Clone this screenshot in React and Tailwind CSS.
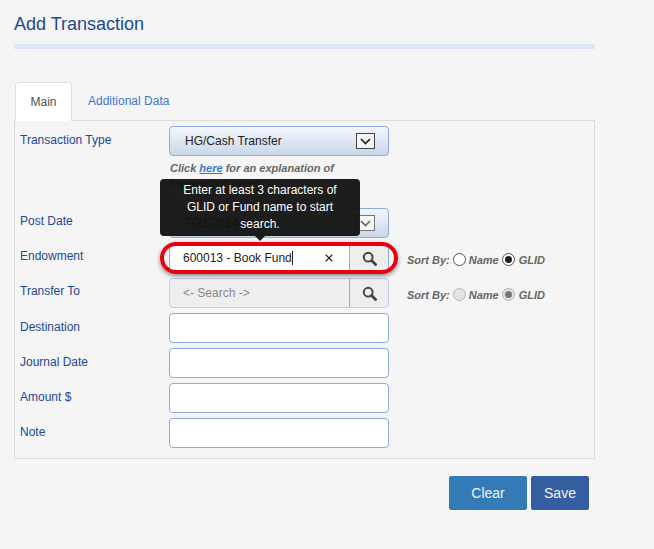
import { useState } from "react";
import { X } from "lucide-react";

const gradientSelect =
  "h-[30px] w-[220px] rounded-[4px] border border-[#8eabdc] bg-gradient-to-b from-[#f3f7fd] to-[#c9d7ea] flex items-center pl-[15px] pr-[13px] text-[12px] text-[#222]";

function Arrow({ muted }) {
  return (
    <span
      className={`ml-auto flex h-[16px] w-[19px] items-center justify-center border bg-[#f6f6f6] ${
        muted ? "border-[#777]" : "border-[#444]"
      }`}
    >
      <svg width="11" height="7" viewBox="0 0 11 7" fill="none" stroke={muted ? "#666" : "#222"} strokeWidth="1.7">
        <path d="M1 1l4.5 4.5L10 1" />
      </svg>
    </span>
  );
}

function Row({ label, low, children }) {
  return (
    <div className="flex">
      <label className={`w-[149px] text-[12px] leading-[16px] text-[#1c4898] ${low ? "pt-[6px]" : "pt-[5px]"}`}>
        {label}
      </label>
      {children}
    </div>
  );
}

function Radio({ on, disabled }) {
  return (
    <span
      className={`flex h-[13px] w-[13px] items-center justify-center rounded-full border ${
        disabled ? "border-[#b5b5b5] bg-[#e4e4e4]" : "border-[#555] bg-white"
      }`}
    >
      {on && <span className={`h-[7px] w-[7px] rounded-full ${disabled ? "bg-[#777]" : "bg-[#222]"}`} />}
    </span>
  );
}

function SortBy({ disabled }) {
  return (
    <div className="ml-[18px] flex items-center pt-[5px] text-[11px] font-bold italic text-[#666]">
      <span className="mr-[3px]">Sort By:</span>
      <span className="-mt-[3px]"><Radio disabled={disabled} /></span>
      <span className="ml-[3px] mr-[3px]">Name</span>
      <span className="-mt-[3px]"><Radio on disabled={disabled} /></span>
      <span className="ml-[4px]">GLID</span>
    </div>
  );
}

function LookupIcon() {
  return (
    <svg width="15" height="15" viewBox="0 0 15 15" fill="none" stroke="#444">
      <circle cx="6.2" cy="6.2" r="4.4" strokeWidth="2" />
      <path d="M9.6 9.6l4 4" strokeWidth="2.8" strokeLinecap="round" />
    </svg>
  );
}

function TextField() {
  return <input className="h-[30px] w-[220px] rounded-[4px] border border-[#8eabdc] bg-white" />;
}

export default function App() {
  const [tab] = useState("main");

  return (
    <div
      className="min-h-[549px] w-[654px] overflow-hidden bg-[#f5f5f5] px-[14px] pt-[13px]"
      style={{ fontFamily: '"Liberation Sans", Arial, sans-serif' }}
    >
      <h1 className="text-[18px] leading-[22px] text-[#1c4898]">Add Transaction</h1>
      <div className="mt-[9px] h-[5px] w-[581px] bg-[#dce6f6]" />

      <div className="mt-[33px] flex h-[38px] w-[581px] pl-px">
        <div
          className={`relative z-10 flex h-[39px] w-[57px] items-center justify-center rounded-t-[4px] border border-b-0 border-[#e0e0e0] bg-white text-[12px] text-[#555] ${
            tab === "main" ? "" : "hidden"
          }`}
        >
          Main
        </div>
        <div className="ml-[16px] flex items-center text-[12px] text-[#3f75d2]">Additional Data</div>
      </div>

      <div className="flex h-[339px] w-[581px] flex-col gap-[5px] border border-[#dcdcdc] px-[5px] pt-[5px]">
        <div>
          <Row label="Transaction Type" low>
            <div className={gradientSelect}>
              HG/Cash Transfer
              <Arrow />
            </div>
          </Row>
          <div className="ml-[150px] mt-[5px] w-[200px] text-[11px] font-bold italic leading-[15px] text-[#666]">
            Click <a className="text-[#3f75d2] underline">here</a> for an explanation of transaction types
          </div>
        </div>

        <div className="mt-[12px]">
          <Row label="Post Date">
            <div className={gradientSelect}>
              7/31/2014
              <Arrow muted />
            </div>
          </Row>
        </div>

        <Row label="Endowment">
          <div className="flex h-[30px] w-[220px] rounded-[4px] border border-[#8eabdc] bg-white">
            <div className="flex flex-1 items-center pl-[13px] pr-[14px] text-[12px] text-[#222]">
              <span className="border-r border-[#222] leading-[14px]">600013 - Book Fund</span>
              <X size={12} strokeWidth={2.2} className="ml-auto text-[#222]" />
            </div>
            <div className="flex w-[39px] items-center justify-center rounded-r-[4px] border-l border-[#8eabdc] bg-[#eeeeee]">
              <LookupIcon />
            </div>
          </div>
          <SortBy />
        </Row>

        <Row label="Transfer To">
          <div className="flex h-[30px] w-[220px] rounded-[4px] border border-[#c3cfe2] bg-[#eeeeee]">
            <div className="flex flex-1 items-center pl-[13px] text-[12px] text-[#888]">{"<- Search ->"}</div>
            <div className="flex w-[39px] items-center justify-center border-l border-[#8eabdc]">
              <LookupIcon />
            </div>
          </div>
          <SortBy disabled />
        </Row>

        <Row label="Destination" low><TextField /></Row>
        <Row label="Journal Date" low><TextField /></Row>
        <Row label="Amount $" low><TextField /></Row>
        <Row label="Note" low><TextField /></Row>
      </div>

      <div className="mt-[17px] flex w-[575px] justify-end gap-[4px]">
        <button className="h-[34px] w-[78px] rounded-[2px] bg-[#337ab7] text-[14px] text-[#f2f6fb]">Clear</button>
        <button className="h-[34px] w-[58px] rounded-[2px] bg-[#355ea1] text-[14px] text-[#f2f6fb]">Save</button>
      </div>

      {/* red callout drawn over the endowment field */}
      <div className="absolute left-[160px] top-[242px] h-[32px] w-[238px] rounded-[16px] border-[4px] border-[#e8000f] shadow-[0_2px_4px_rgba(0,0,0,0.45)]" />

      {/* tooltip */}
      <div className="absolute left-[160px] top-[179px] w-[200px] rounded-[4px] bg-[#111111]/95 px-[10px] pb-[3px] pt-[3px] text-center text-[12px] leading-[17px] text-white">
        Enter at least 3 characters of GLID or Fund name to start search.
        <span className="absolute left-1/2 top-full -ml-[5px] border-x-[5px] border-t-[5px] border-x-transparent border-t-[#1b1b1b]" />
      </div>
    </div>
  );
}
